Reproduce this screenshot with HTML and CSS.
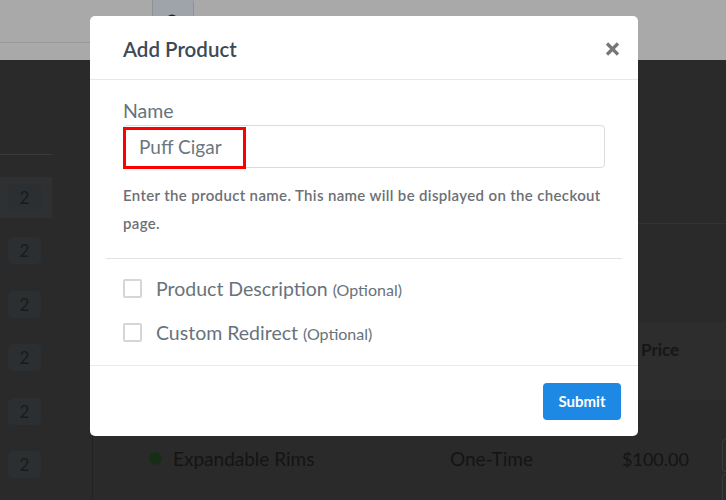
FILE: index.html
```html
<!DOCTYPE html>
<html>
<head>
<meta charset="utf-8">
<link rel="stylesheet" href="styles.css">
</head>
<body>
<div class="page">
  <div class="topbar">
    <div class="search">
      <div class="search-input"></div>
      <div class="search-btn">
        <svg class="search-icon" width="14" height="14" viewBox="0 0 14 14"><circle cx="6" cy="6" r="4.5" fill="none" stroke="#222" stroke-width="2"/><path d="M9.5 9.5 L13 13" stroke="#222" stroke-width="2"/></svg>
      </div>
    </div>
  </div>
  <div class="main">
    <aside class="sidebar">
      <div class="side-head"></div>
      <div class="side-list">
        <div class="side-row active"><span class="badge">2</span></div>
        <div class="side-row"><span class="badge">2</span></div>
        <div class="side-row"><span class="badge">2</span></div>
        <div class="side-row"><span class="badge">2</span></div>
        <div class="side-row"><span class="badge">2</span></div>
        <div class="side-row"><span class="badge">2</span></div>
      </div>
    </aside>
    <section class="content">
      <div class="content-top"></div>
      <div class="content-mid"></div>
      <div class="table-head"><span class="th-price">Price</span></div>
      <div class="table-row">
        <span class="dot"></span>
        <span class="prod">Expandable Rims</span>
        <span class="type">One-Time</span>
        <span class="amount">$100.00</span>
        <span class="edges"><span class="edge-box"></span><span class="edge-box tall"></span></span>
      </div>
    </section>
  </div>
</div>

<div class="modal">
  <div class="modal-header">
    <h2 class="modal-title">Add Product</h2>
    <svg class="close" width="15" height="14" viewBox="0 0 15 14"><path d="M2 1.5 L13 12.5 M13 1.5 L2 12.5" stroke="#777" stroke-width="3.2" stroke-linecap="butt"/></svg>
  </div>
  <div class="modal-body">
    <label class="label">Name</label>
    <div class="input">
      <span class="input-text">Puff Cigar</span>
      <span class="highlight"></span>
    </div>
    <p class="help">Enter the product name. This name will be displayed on the checkout page.</p>
    <div class="divider"></div>
    <div class="check-row"><span class="checkbox"></span><span class="check-label">Product Description <small>(Optional)</small></span></div>
    <div class="check-row"><span class="checkbox"></span><span class="check-label">Custom Redirect <small>(Optional)</small></span></div>
  </div>
  <div class="modal-footer">
    <button class="submit">Submit</button>
  </div>
</div>
</body>
</html>
```

FILE: styles.css
```css
* { box-sizing: border-box; }
html, body { margin: 0; padding: 0; }
body {
  width: 726px;
  height: 500px;
  overflow: hidden;
  background: #2a2a2a;
  font-family: Lato, "Open Sans", sans-serif;
  position: relative;
}
.page { display: flex; flex-direction: column; height: 500px; }
.topbar { height: 60px; background: #a9a9a9; flex: none; }
.search { display: flex; height: 43px; }
.search-input { width: 152px; border-bottom: 1px solid #999; }
.search-btn {
  width: 42px;
  background: #9fa4aa;
  border: 1px solid #8d9297;
  border-top: none;
  border-radius: 0 3px 4px 0;
  display: flex;
  justify-content: center;
  padding-top: 14px;
}
.main { display: flex; flex: 1; }
.sidebar { width: 92px; flex: none; }
.side-head { height: 95px; width: 52px; border-bottom: 1px solid #3a3a3a; }
.side-list { display: flex; flex-direction: column; gap: 12.4px; padding-top: 22px; }
.side-row {
  height: 41px;
  width: 52px;
  display: flex;
  align-items: center;
  padding-left: 8px;
}
.side-row.active { background: #2e3031; }
.badge {
  width: 33px;
  height: 27px;
  border-radius: 5px;
  background: #2c2f31;
  color: #1a1a1b;
  font-size: 17px;
  display: flex;
  align-items: center;
  justify-content: center;
}
.content { flex: 1; border-left: 1px solid #222; display: flex; flex-direction: column; }
.content-top { height: 164px; border-bottom: 1px solid #333; }
.content-mid { height: 98px; }
.table-head {
  height: 78px;
  background: #2d2d2d;
  padding: 17px 0 0 548px;
}
.th-price { color: #161616; font-weight: bold; font-size: 17px; }
.table-row {
  display: flex;
  align-items: flex-start;
  padding: 48px 0 0 56px;
  line-height: 22px;
  color: #141414;
  font-size: 19px;
}
.dot { width: 13px; height: 13px; border-radius: 50%; background: #172e16; margin: 4px 11px 0 0; flex: none; }
.prod { width: 277px; flex: none; }
.type { width: 172px; flex: none; }
.amount { width: 100px; flex: none; font-size: 18px; }
.edges { flex: 1; display: flex; flex-direction: column; gap: 2px; margin-top: -9px; }
.edge-box { height: 33px; border: 1px solid #3a3a3a; border-right: none; border-radius: 4px 0 0 4px; }
.edge-box.tall { height: 40px; }

.modal {
  position: absolute;
  left: 90px;
  top: 16px;
  width: 548px;
  height: 420px;
  background: #fff;
  border-radius: 5px;
  display: flex;
  flex-direction: column;
}
.modal-header {
  height: 64px;
  border-bottom: 1px solid #e6e6e6;
  display: flex;
  align-items: center;
  justify-content: space-between;
  padding: 2px 18px 0 33px;
}
.modal-title { margin: 0; font-size: 20.5px; font-weight: 600; color: #3d4a55; }
.close { display: block; margin-top: 1px; }
.modal-body { padding: 22px 16px 0 16px; flex: 1; }
.label { display: block; margin-left: 17px; font-size: 19.5px; color: #67737c; line-height: 18px; }
.input {
  position: relative;
  margin: 5px 17px 0 17px;
  height: 43px;
  border: 1px solid #dcdcdc;
  border-radius: 4px;
  display: flex;
  align-items: center;
  padding-left: 15px;
}
.input-text { font-size: 19px; color: #6b7781; }
.highlight {
  position: absolute;
  left: -1px;
  top: 1px;
  width: 123px;
  height: 42px;
  border: 3px solid #ff0000;
}
.help {
  margin: 13px 17px 0 17px;
  font-size: 15px;
  letter-spacing: 0.35px;
  line-height: 28px;
  color: #6c7075;
  font-weight: 600;
}
.divider { border-top: 1px solid #e3e3e3; margin-top: 21px; }
.check-row { display: flex; align-items: center; height: 44px; padding-left: 17px; }
.divider + .check-row { margin-top: 7px; }
.checkbox { width: 19px; height: 19px; border: 2px solid #d6d6d6; border-radius: 2px; margin-right: 14px; flex: none; }
.check-label { font-size: 19.5px; color: #67737c; }
.check-label small { font-size: 16px; }
.modal-footer {
  height: 71px;
  border-top: 1px solid #eaeaea;
  display: flex;
  align-items: center;
  justify-content: flex-end;
  padding-right: 17px;
}
.submit {
  width: 78px;
  height: 37px;
  border: none;
  border-radius: 4px;
  background: #1e88e5;
  color: #fff;
  font-family: Lato, sans-serif;
  font-size: 15px;
  font-weight: bold;
}
```
